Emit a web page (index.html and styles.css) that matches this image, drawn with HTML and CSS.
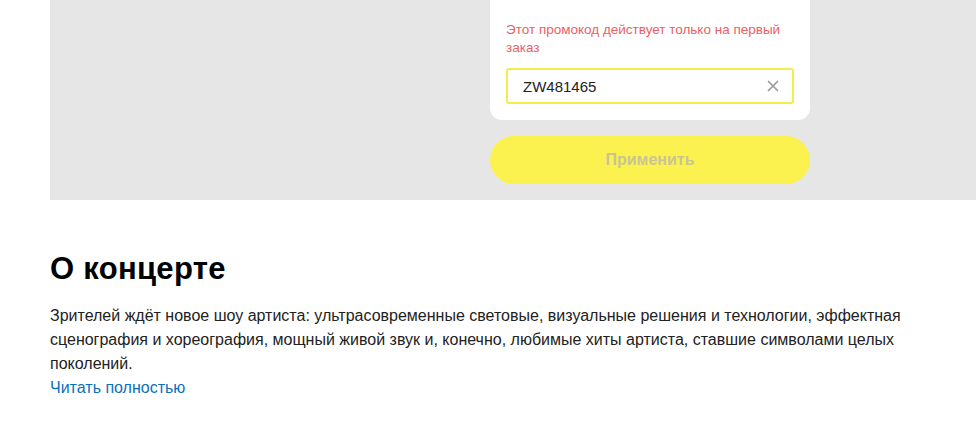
FILE: index.html
```html
<!DOCTYPE html>
<html lang="ru">

<head>
    <meta charset="UTF-8">
    <title>О концерте</title>
    <link rel="stylesheet" href="styles.css">
</head>

<body>

    <div class="promo">
        <div class="promo-col">
            <div class="promo-card">
                <div class="promo-error">Этот промокод действует только на первый заказ</div>
                <div class="promo-field">
                    <input class="promo-input" type="text" value="ZW481465">
                    <span class="promo-clear">
                        <svg width="12" height="12" viewBox="0 0 12 12">
                            <path d="M1 1L11 11M11 1L1 11" stroke="#999" stroke-width="1.6" fill="none" />
                        </svg>
                    </span>
                </div>
            </div>
            <button class="promo-apply" type="button" disabled>Применить</button>
        </div>
    </div>

    <div class="about">
        <h2 class="about-title">О концерте</h2>
        <p class="about-text">Зрителей ждёт новое шоу артиста: ультрасовременные световые, визуальные решения и технологии, эффектная сценография и хореография, мощный живой звук и, конечно, любимые хиты артиста, ставшие символами целых поколений.</p>
        <a class="about-more" href="#">Читать полностью</a>
    </div>

</body>

</html>
```

FILE: styles.css
```css
* {
    margin: 0;
    padding: 0;
    box-sizing: border-box;
}

body {
    font-family: "Liberation Sans", Arial, sans-serif;
    color: #222;
    background: #fff;
}

.promo {
    margin-left: 50px;
    background: #e6e6e6;
    padding-bottom: 16px;
}

.promo-col {
    margin-left: 440px;
    width: 320px;
}

.promo-card {
    background: #fff;
    border-radius: 0 0 12px 12px;
    padding: 21px 16px 16px;
}

.promo-error {
    font-size: 13.5px;
    line-height: 18px;
    color: #e95f66;
    padding-right: 10px;
}

.promo-field {
    position: relative;
    margin-top: 11px;
}

.promo-input {
    display: block;
    width: 100%;
    height: 36px;
    border: 2px solid #f3ec4c;
    border-radius: 3px;
    padding: 0 40px 0 15px;
    font-family: inherit;
    font-size: 15px;
    color: #222;
    outline: none;
}

.promo-clear {
    position: absolute;
    right: 15px;
    top: 12px;
    width: 12px;
    height: 12px;
    display: flex;
}

.promo-apply {
    display: block;
    width: 100%;
    height: 48px;
    margin-top: 16px;
    border: none;
    border-radius: 24px;
    background: #fbf250;
    font-family: inherit;
    font-size: 16px;
    font-weight: bold;
    color: #cac494;
}

.about {
    padding: 51px 50px 0;
}

.about-title {
    font-size: 31px;
    line-height: 36px;
    font-weight: bold;
    letter-spacing: 0.3px;
    color: #000;
}

.about-text {
    margin-top: 17px;
    max-width: 880px;
    font-size: 16px;
    line-height: 24px;
    color: #222;
}

.about-more {
    display: block;
    font-size: 16px;
    line-height: 24px;
    color: #0a70b8;
    text-decoration: none;
}
```
